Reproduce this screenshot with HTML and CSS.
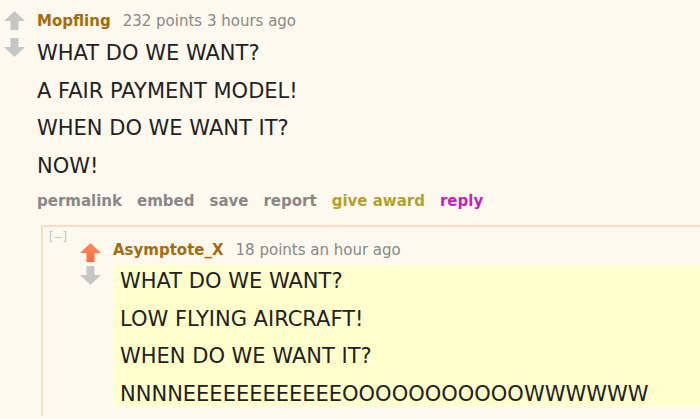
FILE: index.html
```html
<!DOCTYPE html>
<html lang="en">
<head>
  <meta charset="UTF-8" />
  <meta name="viewport" content="width=device-width, initial-scale=1.0" />
  <title>Comments</title>
  <link rel="stylesheet" href="styles.css">
</head>
<body>
  <div class="comment">
    <div class="votes">
      <svg class="arrow" width="21" height="19" viewBox="0 0 21 19"><path d="M0 10 L10.5 0 L21 10 L14.5 10 L14.5 19 L6.5 19 L6.5 10 Z" fill="#c6c6c6"/></svg>
      <svg class="arrow" width="21" height="19" viewBox="0 0 21 19"><path d="M0 9 L10.5 19 L21 9 L14.5 9 L14.5 0 L6.5 0 L6.5 9 Z" fill="#c6c6c6"/></svg>
    </div>
    <div class="entry">
      <div class="tagline"><a class="author">Mopfling</a><span class="score">232 points 3 hours ago</span></div>
      <div class="md">
        <p>WHAT DO WE WANT?</p>
        <p>A FAIR PAYMENT MODEL!</p>
        <p>WHEN DO WE WANT IT?</p>
        <p>NOW!</p>
      </div>
      <ul class="buttons">
        <li>permalink</li>
        <li>embed</li>
        <li>save</li>
        <li>report</li>
        <li class="award">give award</li>
        <li class="reply">reply</li>
      </ul>

      <div class="child">
        <div class="comment">
          <div class="collapse">[–]</div>
          <div class="votes nested">
            <svg class="arrow" width="21" height="19" viewBox="0 0 21 19">
              <defs><linearGradient id="up" x1="0" y1="0" x2="0" y2="1"><stop offset="0" stop-color="#ff8b60"/><stop offset="1" stop-color="#ff6a3e"/></linearGradient></defs>
              <path d="M0 10 L10.5 0 L21 10 L14.5 10 L14.5 19 L6.5 19 L6.5 10 Z" fill="url(#up)"/>
            </svg>
            <svg class="arrow" width="21" height="19" viewBox="0 0 21 19"><path d="M0 9 L10.5 19 L21 9 L14.5 9 L14.5 0 L6.5 0 L6.5 9 Z" fill="#c6c6c6"/></svg>
          </div>
          <div class="entry nested">
            <div class="tagline"><a class="author">Asymptote_X</a><span class="score">18 points an hour ago</span></div>
            <div class="md highlight">
              <p>WHAT DO WE WANT?</p>
              <p>LOW FLYING AIRCRAFT!</p>
              <p>WHEN DO WE WANT IT?</p>
              <p>NNNNEEEEEEEEEEEEOOOOOOOOOOOWWWWWW</p>
            </div>
          </div>
        </div>
      </div>
    </div>
  </div>
</body>
</html>
```

FILE: styles.css
```css
body {
  margin: 0;
  background-color: #fdf9ef;
  font-family: "DejaVu Sans", Verdana, sans-serif;
  color: #222;
  overflow: hidden;
}
.comment {
  display: flex;
}
.votes {
  width: 37px;
  padding: 11px 0 0 4px;
  display: flex;
  flex-direction: column;
  gap: 8px;
  box-sizing: border-box;
  flex-shrink: 0;
}
.votes.nested {
  width: 33px;
  padding: 16px 0 0 0;
  gap: 4px;
}
.arrow {
  display: block;
}
.entry {
  flex: 1;
  padding-top: 11px;
}
.entry.nested {
  padding-top: 13px;
}
.tagline {
  font-size: 15px;
  line-height: 20px;
  white-space: nowrap;
}
.author {
  color: #a36c0c;
  font-weight: bold;
  margin-right: 12px;
}
.score {
  color: #888;
}
.md {
  margin-top: 10px;
  font-size: 21px;
}
.md p {
  margin: 0 0 13.5px 0;
  line-height: 24px;
  white-space: nowrap;
}
.highlight {
  margin-top: 5px;
  background-color: #ffffcc;
  padding: 4px 0 0 7px;
}
.highlight p:last-child {
  margin-bottom: 0;
}
.buttons {
  list-style: none;
  margin: 0;
  padding: 0;
  display: flex;
  gap: 15px;
  font-size: 15px;
  line-height: 20px;
  font-weight: bold;
  color: #888;
}
.buttons .award {
  color: #b3a02c;
}
.buttons .reply {
  color: #c31fc3;
}
.child {
  margin: 14px 0 0 4px;
  border-top: 2px solid #f7dfbf;
  border-left: 2px solid #f7dfbf;
  padding: 0 0 10px 4px;
}
.collapse {
  width: 33px;
  flex-shrink: 0;
  padding-top: 3px;
  font-size: 12px;
  line-height: 14px;
  color: #c4c4c4;
  font-family: "DejaVu Sans Mono", monospace;
}
```
